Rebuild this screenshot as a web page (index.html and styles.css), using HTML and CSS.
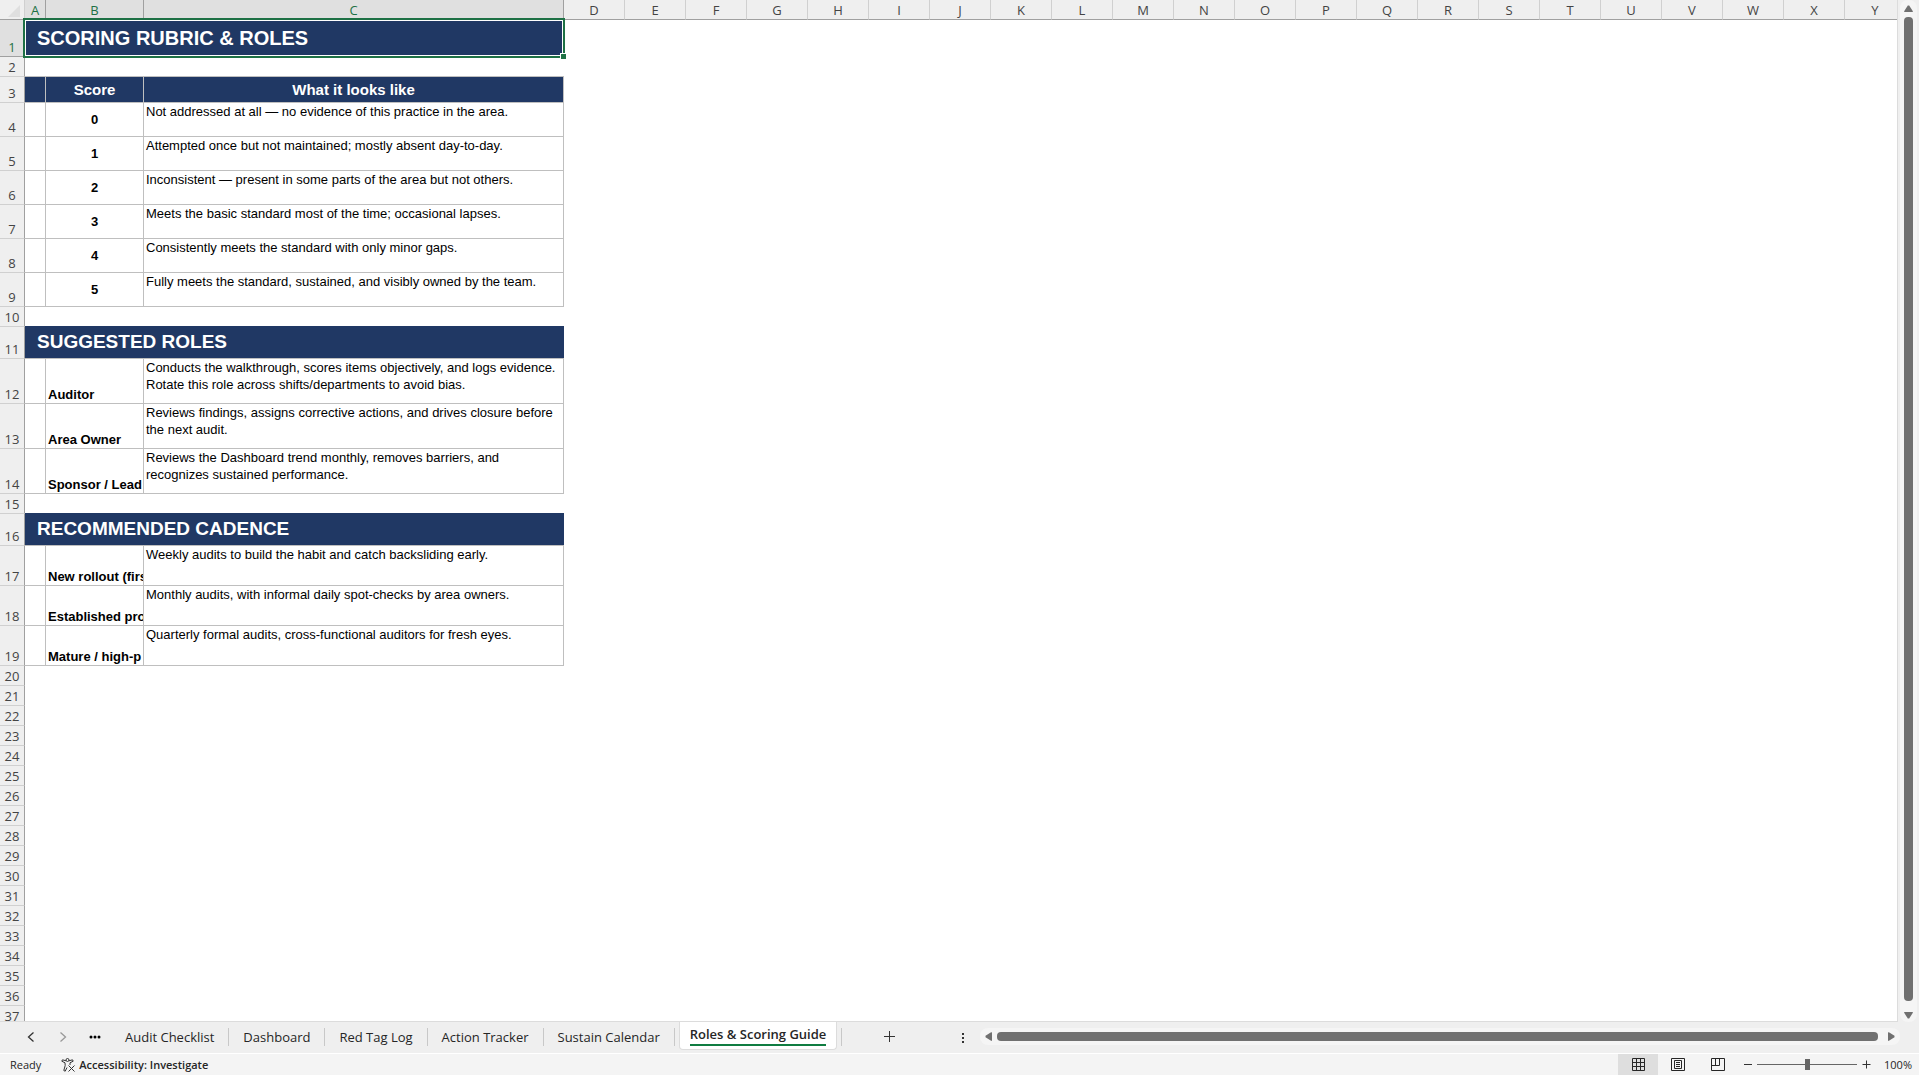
FILE: index.html
```html
<!DOCTYPE html>
<html lang="en">
<head>
<meta charset="utf-8">
<title>Roles &amp; Scoring Guide</title>
<link rel="stylesheet" href="styles.css">
</head>
<body>
<div class="app">
  <main class="workspace">
    <div class="sheet">
      <table class="grid">
        <colgroup>
          <col class="col-head"><col class="col-a"><col class="col-b"><col class="col-c">
          <col span="22" class="col-std">
        </colgroup>
        <thead>
          <tr>
            <th class="corner"><svg width="12" height="12" viewBox="0 0 12 12" aria-hidden="true"><path d="M12 0V12H0Z" fill="#dfdfdf"/></svg></th>
            <th class="on" scope="col">A</th><th class="on" scope="col">B</th><th class="on" scope="col">C</th>
            <th scope="col">D</th><th scope="col">E</th><th scope="col">F</th><th scope="col">G</th><th scope="col">H</th><th scope="col">I</th><th scope="col">J</th><th scope="col">K</th><th scope="col">L</th><th scope="col">M</th><th scope="col">N</th><th scope="col">O</th><th scope="col">P</th><th scope="col">Q</th><th scope="col">R</th><th scope="col">S</th><th scope="col">T</th><th scope="col">U</th><th scope="col">V</th><th scope="col">W</th><th scope="col">X</th><th scope="col">Y</th>
          </tr>
        </thead>
        <tbody>
          <tr class="r-title"><th class="on" scope="row">1</th><td class="band title" colspan="3">SCORING RUBRIC &amp; ROLES<span class="selection"><span class="handle"></span></span></td></tr>
          <tr><th scope="row">2</th><td class="under" colspan="3"></td></tr>
          <tr class="r-head"><th scope="row">3</th><td class="head"></td><td class="head">Score</td><td class="head">What it looks like</td></tr>
          <tr class="r-score"><th scope="row">4</th><td class="cell"></td><td class="cell score">0</td><td class="cell note">Not addressed at all — no evidence of this practice in the area.</td></tr>
          <tr class="r-score"><th scope="row">5</th><td class="cell"></td><td class="cell score">1</td><td class="cell note">Attempted once but not maintained; mostly absent day-to-day.</td></tr>
          <tr class="r-score"><th scope="row">6</th><td class="cell"></td><td class="cell score">2</td><td class="cell note">Inconsistent — present in some parts of the area but not others.</td></tr>
          <tr class="r-score"><th scope="row">7</th><td class="cell"></td><td class="cell score">3</td><td class="cell note">Meets the basic standard most of the time; occasional lapses.</td></tr>
          <tr class="r-score"><th scope="row">8</th><td class="cell"></td><td class="cell score">4</td><td class="cell note">Consistently meets the standard with only minor gaps.</td></tr>
          <tr class="r-score"><th scope="row">9</th><td class="cell"></td><td class="cell score">5</td><td class="cell note">Fully meets the standard, sustained, and visibly owned by the team.</td></tr>
          <tr><th scope="row">10</th><td class="above-band" colspan="3"></td></tr>
          <tr class="r-band"><th scope="row">11</th><td class="band" colspan="3">SUGGESTED ROLES</td></tr>
          <tr class="r-role"><th scope="row">12</th><td class="cell"></td><td class="cell label">Auditor</td><td class="cell note">Conducts the walkthrough, scores items objectively, and logs evidence.<br>Rotate this role across shifts/departments to avoid bias.</td></tr>
          <tr class="r-role"><th scope="row">13</th><td class="cell"></td><td class="cell label">Area Owner</td><td class="cell note">Reviews findings, assigns corrective actions, and drives closure before<br>the next audit.</td></tr>
          <tr class="r-role"><th scope="row">14</th><td class="cell"></td><td class="cell label">Sponsor / Lead</td><td class="cell note">Reviews the Dashboard trend monthly, removes barriers, and<br>recognizes sustained performance.</td></tr>
          <tr><th scope="row">15</th><td class="above-band" colspan="3"></td></tr>
          <tr class="r-band"><th scope="row">16</th><td class="band" colspan="3">RECOMMENDED CADENCE</td></tr>
          <tr class="r-cadence"><th scope="row">17</th><td class="cell"></td><td class="cell label">New rollout (firs</td><td class="cell note">Weekly audits to build the habit and catch backsliding early.</td></tr>
          <tr class="r-cadence"><th scope="row">18</th><td class="cell"></td><td class="cell label">Established pro</td><td class="cell note">Monthly audits, with informal daily spot-checks by area owners.</td></tr>
          <tr class="r-cadence"><th scope="row">19</th><td class="cell"></td><td class="cell label">Mature / high-p</td><td class="cell note">Quarterly formal audits, cross-functional auditors for fresh eyes.</td></tr>
          <tr><th scope="row">20</th></tr>
          <tr><th scope="row">21</th></tr>
          <tr><th scope="row">22</th></tr>
          <tr><th scope="row">23</th></tr>
          <tr><th scope="row">24</th></tr>
          <tr><th scope="row">25</th></tr>
          <tr><th scope="row">26</th></tr>
          <tr><th scope="row">27</th></tr>
          <tr><th scope="row">28</th></tr>
          <tr><th scope="row">29</th></tr>
          <tr><th scope="row">30</th></tr>
          <tr><th scope="row">31</th></tr>
          <tr><th scope="row">32</th></tr>
          <tr><th scope="row">33</th></tr>
          <tr><th scope="row">34</th></tr>
          <tr><th scope="row">35</th></tr>
          <tr><th scope="row">36</th></tr>
          <tr><th scope="row">37</th></tr>
        </tbody>
      </table>
    </div>
    <div class="vscroll">
      <svg width="9" height="7" viewBox="0 0 9 7" aria-hidden="true"><path d="M3.800 0.500H5.200L9 6.500 8.500 7H0.500L0 6.500Z"/></svg>
      <div class="thumb"></div>
      <svg width="9" height="7" viewBox="0 0 9 7" aria-hidden="true"><path d="M3.800 6.500H5.200L9 0.500 8.500 0H0.500L0 0.500Z"/></svg>
    </div>
  </main>

  <nav class="tabbar" aria-label="Sheets">
    <div class="tabnav">
      <button type="button" aria-label="Previous sheet"><svg width="12" height="12" viewBox="0 0 12 12"><path d="M8.500 1.500 3.500 6 8.500 10.500" fill="none" stroke="#333" stroke-width="1.300"/></svg></button>
      <button type="button" aria-label="Next sheet"><svg width="12" height="12" viewBox="0 0 12 12"><path d="M3.500 1.500 8.500 6 3.500 10.500" fill="none" stroke="#999" stroke-width="1.300"/></svg></button>
      <button type="button" aria-label="More sheets"><svg width="12" height="4" viewBox="0 0 12 4"><circle cx="2" cy="2" r="1.500"/><circle cx="6" cy="2" r="1.500"/><circle cx="10" cy="2" r="1.500"/></svg></button>
    </div>
    <div class="tabs">
      <button type="button" class="tab">Audit Checklist</button>
      <button type="button" class="tab">Dashboard</button>
      <button type="button" class="tab">Red Tag Log</button>
      <button type="button" class="tab">Action Tracker</button>
      <button type="button" class="tab">Sustain Calendar</button>
      <button type="button" class="tab current"><span>Roles &amp; Scoring Guide</span></button>
    </div>
    <div class="new">
      <button type="button" aria-label="New sheet"><svg width="12" height="12" viewBox="0 0 12 12"><path d="M5.500 0V11M0 5.500H11" stroke="#333" fill="none"/></svg></button>
    </div>
    <div class="dots" aria-hidden="true"><i></i><i></i><i></i></div>
    <div class="hscroll">
      <svg width="7" height="9" viewBox="0 0 7 9" aria-hidden="true"><path d="M0.500 3.800V5.200L6.500 9 7 8.500V0.500L6.500 0Z"/></svg>
      <div class="thumb"></div>
      <svg width="7" height="9" viewBox="0 0 7 9" aria-hidden="true"><path d="M6.500 3.800V5.200L0.500 9 0 8.500V0.500L0.500 0Z"/></svg>
    </div>
  </nav>

  <footer class="status">
    <span class="ready">Ready</span>
    <button type="button" class="access">
      <svg width="15" height="14" viewBox="0 0 15 14" fill="none" stroke="#333" aria-hidden="true"><circle cx="6.500" cy="2" r="1.500"/><path d="M5 2.800 1.500 1.800 0.800 3.200 4 4.800 4.200 7.500 2.800 12.500 4.200 13.200 6 9.500M8 2.800 11.500 1.800 12.200 3.200 9 4.800V7M7.500 7.500 13.500 13.500M13.500 7.500 7.500 13.500"/></svg>
      Accessibility: Investigate
    </button>
    <div class="views">
      <button type="button" class="active" aria-label="Normal"><svg width="13" height="13" viewBox="0 0 13 13"><path d="M0.500 0.500H12.500V12.500H0.500ZM4.500 0.500V12.500M8.500 0.500V12.500M0.500 4.500H12.500M0.500 8.500H12.500"/></svg></button>
      <button type="button" aria-label="Page layout"><svg width="14" height="13" viewBox="0 0 14 13"><path d="M0.500 0.500H13.500V12.500H0.500ZM3.500 2.500H10.500V10.500H3.500ZM5 4.500H9M5 6.500H9M5 8.500H9"/></svg></button>
      <button type="button" aria-label="Page break preview"><svg width="14" height="13" viewBox="0 0 14 13"><path d="M0.500 0.500H13.500V12.500H0.500ZM0.500 7.500H8.500V0.500M4.500 0.500V7.500"/></svg></button>
    </div>
    <div class="zoom">
      <button type="button" aria-label="Zoom out"><svg width="8" height="9" viewBox="0 0 8 9"><path d="M0 4.500H8"/></svg></button>
      <input type="range" min="0" max="100" value="50" aria-label="Zoom">
      <button type="button" aria-label="Zoom in"><svg width="9" height="9" viewBox="0 0 9 9"><path d="M0.500 4.500H8.500M4.500 0.500V8.500"/></svg></button>
    </div>
    <span class="percent">100%</span>
  </footer>
</div>
</body>
</html>
```

FILE: styles.css
```css
* { box-sizing: border-box; }

body {
  margin: 0;
  background: #fff;
  color: #262626;
  font-family: "Open Sans", "Noto Sans", sans-serif;
}

button {
  margin: 0;
  padding: 0;
  border: 0;
  background: none;
  color: inherit;
  font: inherit;
}

svg { display: block; flex: none; }

.app {
  display: flex;
  flex-direction: column;
  height: 100vh;
  overflow: hidden;
}

/* Worksheet */

.workspace {
  display: flex;
  flex: 1;
  min-height: 0;
  background: #efefef;
}

.sheet {
  flex: 1;
  min-width: 0;
  overflow: hidden;
  background: #fff;
  border-right: 1px solid #dcdcdc;
  border-bottom: 1px solid #dcdcdc;
}

.grid {
  width: 1906px;
  table-layout: fixed;
  border-collapse: separate;
  border-spacing: 0;
}

.col-head { width: 25px; }
.col-a { width: 21px; }
.col-b { width: 98px; }
.col-c { width: 420px; }
.col-std { width: 61px; }

.grid tr { height: 20px; }
.grid .r-title { height: 37px; }
.grid .r-head { height: 26px; }
.grid .r-score { height: 34px; }
.grid .r-band { height: 32px; }
.grid .r-role { height: 45px; }
.grid .r-cadence { height: 40px; }

.grid th {
  padding: 0;
  background: #efefef;
  color: #444;
  font-size: 13px;
  font-weight: 400;
  line-height: 17px;
}

.grid thead th {
  padding-top: 2px;
  border-right: 1px solid #d0d0d0;
  border-bottom: 1px solid #a0a0a0;
}

.grid tbody th {
  border-right: 1px solid #a0a0a0;
  border-bottom: 1px solid #d0d0d0;
  vertical-align: bottom;
}

.grid th.on {
  background: #e0e0e0;
  border-color: #a0a0a0;
  color: #1e7145;
}

.grid .corner svg { margin: 0 0 0 8px; }

.grid td {
  padding: 0;
  overflow: hidden;
  white-space: nowrap;
  font-family: "Liberation Sans", Arial, sans-serif;
  color: #000;
}

.grid .under { border-bottom: 1px solid #bfbfbf; }

.grid .above-band { border-bottom: 1px solid #203864; }

.grid .band {
  padding: 0 0 1px 12px;
  background: #203864;
  border-bottom: 1px solid #bfbfbf;
  color: #fff;
  font-size: 19px;
  font-weight: 700;
  line-height: 24px;
}

.grid .title {
  position: relative;
  overflow: visible;
  padding-bottom: 2px;
  border: 0;
  font-size: 20px;
}

.grid .head {
  background: #203864;
  border-right: 1px solid #bfbfbf;
  border-bottom: 1px solid #bfbfbf;
  color: #fff;
  font-size: 15px;
  font-weight: 700;
  line-height: 18px;
  text-align: center;
}

.grid .cell {
  border-right: 1px solid #bfbfbf;
  border-bottom: 1px solid #bfbfbf;
  font-size: 13px;
  line-height: 17px;
}

.grid .score {
  font-weight: 700;
  text-align: center;
}

.grid .label {
  padding-left: 2px;
  font-weight: 700;
  vertical-align: bottom;
}

.grid .note {
  padding-left: 2px;
  vertical-align: top;
}

.selection {
  position: absolute;
  inset: -2px -1px -1px -2px;
  border: 2px solid #1e7145;
  box-shadow: inset 0 0 0 1px #fff;
}

.handle {
  position: absolute;
  right: -3px;
  bottom: -3px;
  width: 6px;
  height: 6px;
  background: #1e7145;
  border-top: 1px solid #fff;
  border-left: 1px solid #fff;
}

/* Scroll bars */

.vscroll {
  display: flex;
  flex-direction: column;
  align-items: center;
  gap: 5px;
  width: 17px;
  margin: 0 2px;
  padding: 5px 0 3px;
  background: #f5f5f5;
  border-radius: 8px;
  fill: #707070;
}

.vscroll .thumb {
  flex: 1;
  width: 9px;
  margin-bottom: 6px;
  background: #707070;
  border-radius: 4px;
}

.hscroll {
  display: flex;
  flex: 1;
  align-items: center;
  gap: 5px;
  height: 17px;
  padding: 0 5px;
  background: #f5f5f5;
  border-radius: 8px;
  fill: #707070;
}

.hscroll .thumb {
  flex: 1;
  height: 9px;
  margin-right: 5px;
  background: #707070;
  border-radius: 4px;
}

/* Sheet tabs */

.tabbar {
  display: flex;
  align-items: center;
  height: 32px;
  padding: 0 19px 2px 0;
  background: #efefef;
  border-bottom: 1px solid #fff;
}

.tabnav {
  display: flex;
  align-items: center;
  gap: 20px;
  padding-left: 25px;
  margin-right: 10px;
}

.tabs {
  display: flex;
  align-self: stretch;
  align-items: center;
}

.tab {
  height: 18px;
  padding: 0 14px;
  border-right: 1px solid #c8c8c8;
  font-size: 13px;
  line-height: 18px;
  white-space: nowrap;
}

.tab.current {
  display: flex;
  align-self: flex-start;
  height: 28px;
  margin: 0 4px;
  padding: 3px 10px;
  background: #fff;
  border: 1px solid #dcdcdc;
  border-top: 0;
  border-radius: 0 0 4px 4px;
  font-weight: 600;
}

.tab.current span {
  height: 21px;
  border-bottom: 2px solid #107c41;
}

.new {
  display: flex;
  align-items: center;
  height: 18px;
  padding-left: 42px;
  border-left: 1px solid #c8c8c8;
}

.dots {
  display: flex;
  flex-direction: column;
  gap: 2px;
  margin: 3px 16px 0 66px;
}

.dots i {
  width: 2px;
  height: 2px;
  background: #333;
}

/* Status bar */

.status {
  display: flex;
  align-items: center;
  height: 21px;
  background: #f4f4f4;
  font-size: 11px;
  line-height: 15px;
}

.ready { margin-left: 10px; }

.access {
  display: flex;
  align-items: center;
  gap: 3px;
  margin-left: 20px;
  font-weight: 600;
}

.views {
  display: flex;
  align-self: stretch;
  margin-left: auto;
  fill: none;
  stroke: #262626;
}

.views button {
  display: flex;
  align-items: center;
  justify-content: center;
  width: 40px;
  padding-bottom: 1px;
}

.views .active { background: #dedede; }

.zoom {
  display: flex;
  align-items: center;
  gap: 5px;
  margin-left: 6px;
  stroke: #333;
}

.zoom input {
  width: 100px;
  height: 11px;
  margin: 0;
  appearance: none;
  background: linear-gradient(#666, #666) center / 100% 1px no-repeat;
}

.zoom input::-webkit-slider-thumb {
  appearance: none;
  width: 5px;
  height: 11px;
  background: #666;
}

.percent {
  width: 48px;
  padding-right: 7px;
  text-align: right;
}
```
